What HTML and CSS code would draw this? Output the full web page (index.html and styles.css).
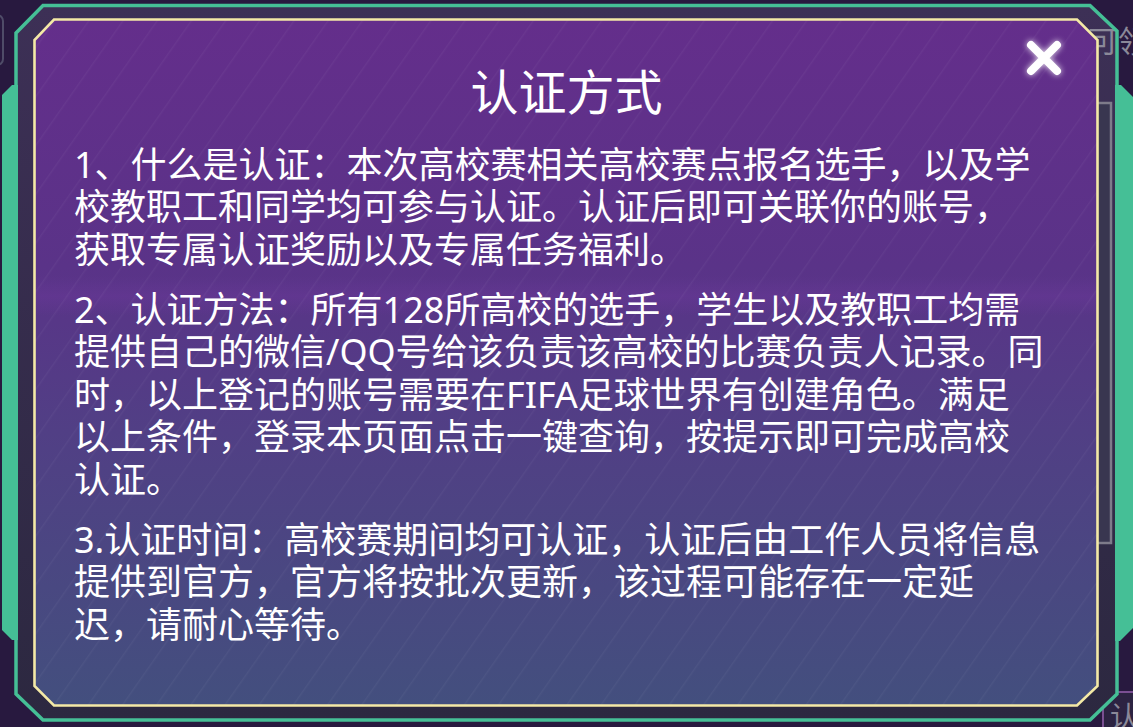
FILE: index.html
```html
<!DOCTYPE html>
<html lang="zh-CN">
<head>
<meta charset="utf-8">
<title>认证方式</title>
<link rel="stylesheet" href="styles.css">
</head>
<body>
<div class="modal">
  <svg class="frame" viewBox="0 0 1133 727" width="1133" height="727" aria-hidden="true">
    <defs>
      <linearGradient id="panel" x1="0" y1="0" x2="0" y2="1">
        <stop offset="0" stop-color="#642e8b"/>
        <stop offset="0.36" stop-color="#5a3388"/>
        <stop offset="0.6" stop-color="#513f85"/>
        <stop offset="1" stop-color="#434f7e"/>
      </linearGradient>
      <linearGradient id="band" x1="0" y1="0" x2="0" y2="1">
        <stop offset="0" stop-color="#3d3056"/>
        <stop offset="1" stop-color="#2c2840"/>
      </linearGradient>
      <linearGradient id="glow" x1="0" y1="0" x2="0" y2="1">
        <stop offset="0" stop-color="#7a3aa8" stop-opacity="0"/>
        <stop offset="0.5" stop-color="#7a3aa8" stop-opacity="0.25"/>
        <stop offset="1" stop-color="#7a3aa8" stop-opacity="0"/>
      </linearGradient>
      <pattern id="stripes" width="28" height="28" patternUnits="userSpaceOnUse" patternTransform="rotate(35)">
        <rect x="0" y="0" width="1.4" height="28" fill="#ffffff" fill-opacity="0.04"/>
      </pattern>
    </defs>
    <rect width="1133" height="727" fill="#28193f"/>
    <rect x="-20" y="15" width="23" height="50" rx="6" fill="none" stroke="#4f4c68" stroke-width="2"/>
    <rect x="1103" y="692" width="44" height="50" rx="7" fill="#2c2342" stroke="#7a4f92" stroke-width="2"/>
    <text x="1110" y="727" class="bg-text" font-size="28">认</text>
    <polygon points="43,5.5 1090,5.5 1117,31 1117,694 1090,720 43,720 16,694 16,33" fill="url(#band)"/>
    <rect x="1089" y="103" width="22" height="440" fill="#393650" stroke="#7e7b8a" stroke-width="2.5"/>
    <text x="1088" y="52" class="bg-text" font-size="30">可领</text>
    <polygon points="43,5.5 1090,5.5 1117,31 1117,694 1090,720 43,720 16,694 16,33" fill="none" stroke="#45bf96" stroke-width="3.5" stroke-linejoin="miter"/>
    <polygon points="2,95 12,85 18,85 18,640 12,640 2,630" fill="#45bf96"/>
    <polygon points="1115,85 1121,85 1133,97 1133,628 1120,641 1115,641" fill="#45bf96"/>
    <polygon points="54,19.5 1077,19.5 1097.5,40 1097.5,686 1077,705.5 54,705.5 34.5,686 34.5,40" fill="url(#panel)"/>
    <rect x="36" y="276" width="1060" height="40" fill="url(#glow)"/>
    <polygon points="54,19.5 1077,19.5 1097.5,40 1097.5,686 1077,705.5 54,705.5 34.5,686 34.5,40" fill="url(#stripes)"/>
    <polygon points="54,19.5 1077,19.5 1097.5,40 1097.5,686 1077,705.5 54,705.5 34.5,686 34.5,40" fill="none" stroke="#f4e9a6" stroke-width="2.6"/>
  </svg>

  <button class="close" type="button" aria-label="关闭">
    <svg viewBox="0 0 40 40" width="40" height="40">
      <path d="M7 7 L33 33 M33 7 L7 33" stroke="#ffffff" stroke-width="8" stroke-linecap="round" fill="none"/>
    </svg>
  </button>

  <div class="content">
    <h1 class="title">认证方式</h1>
    <div class="body">
      <p>1、什么是认证：本次高校赛相关高校赛点报名选手，以及学<br>校教职工和同学均可参与认证。认证后即可关联你的账号，<br>获取专属认证奖励以及专属任务福利。</p>
      <p>2、认证方法：所有128所高校的选手，学生以及教职工均需<br>提供自己的微信/QQ号给该负责该高校的比赛负责人记录。同<br>时，以上登记的账号需要在FIFA足球世界有创建角色。满足<br>以上条件，登录本页面点击一键查询，按提示即可完成高校<br>认证。</p>
      <p>3.认证时间：高校赛期间均可认证，认证后由工作人员将信息<br>提供到官方，官方将按批次更新，该过程可能存在一定延<br>迟，请耐心等待。</p>
    </div>
  </div>
</div>
</body>
</html>
```

FILE: styles.css
```css
html, body {
  margin: 0;
  padding: 0;
  background: #28193f;
}

.modal {
  position: relative;
  width: 1133px;
  height: 727px;
  overflow: hidden;
  font-family: "Noto Sans", "Noto Sans CJK SC", sans-serif;
  color: #ffffff;
}

.frame {
  position: absolute;
  left: 0;
  top: 0;
  display: block;
}

.bg-text {
  fill: #8b8999;
  font-family: "Noto Sans CJK SC", sans-serif;
}

.content {
  position: relative;
  padding-top: 67px;
}

.title {
  margin: 0;
  font-size: 48px;
  line-height: 50px;
  font-weight: 400;
  text-align: center;
}

.body {
  margin: 26.5px 0 0 74px;
  font-size: 36px;
  line-height: 42.5px;
  white-space: nowrap;
}

.body p {
  margin: 0 0 17.5px;
}

.close {
  position: absolute;
  left: 1024px;
  top: 38px;
  width: 40px;
  height: 40px;
  padding: 0;
  border: 0;
  background: none;
  cursor: pointer;
  z-index: 2;
  filter: drop-shadow(0 0 3px rgba(255, 255, 255, 0.85));
}

.close svg {
  display: block;
}
```
